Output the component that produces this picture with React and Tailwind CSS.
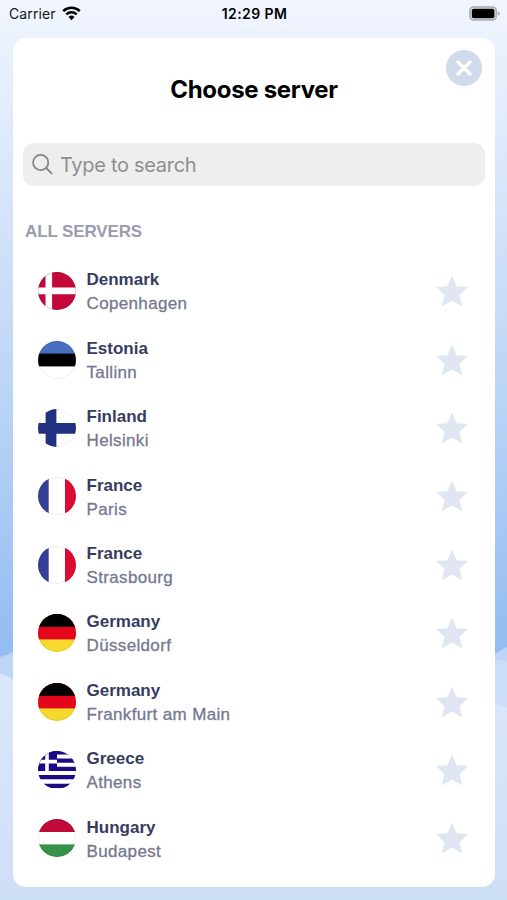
import { useState } from "react";

const servers = [
  { flag: "denmark", country: "Denmark", city: "Copenhagen" },
  { flag: "estonia", country: "Estonia", city: "Tallinn" },
  { flag: "finland", country: "Finland", city: "Helsinki" },
  { flag: "france", country: "France", city: "Paris" },
  { flag: "france", country: "France", city: "Strasbourg" },
  { flag: "germany", country: "Germany", city: "Düsseldorf" },
  { flag: "germany", country: "Germany", city: "Frankfurt am Main" },
  { flag: "greece", country: "Greece", city: "Athens" },
  { flag: "hungary", country: "Hungary", city: "Budapest" },
];

const flags = {
  denmark: (
    <>
      <rect width="38" height="38" fill="#c2083b" />
      <path d="M10.8 0v38M0 18.9h38" stroke="#fff" strokeWidth="6.6" />
    </>
  ),
  estonia: (
    <>
      <rect width="38" height="38" fill="#fff" />
      <rect width="38" height="13" fill="#466fbe" />
      <rect y="12.6" width="38" height="12.8" fill="#000" />
    </>
  ),
  finland: (
    <>
      <rect width="38" height="38" fill="#fff" />
      <path d="M13 0v38M0 19.4h38" stroke="#20327f" strokeWidth="10.8" />
    </>
  ),
  france: (
    <>
      <rect width="38" height="38" fill="#fff" />
      <rect width="10.7" height="38" fill="#343f97" />
      <rect x="27" width="11" height="38" fill="#dd0a34" />
    </>
  ),
  germany: (
    <>
      <rect width="38" height="38" fill="#f6d92c" />
      <rect width="38" height="25.4" fill="#e4061c" />
      <rect width="38" height="12.8" fill="#000" />
    </>
  ),
  greece: (
    <>
      <rect width="38" height="38" fill="#fff" />
      <path d="M0 1.4h38M0 9.6h38M0 17.8h38M0 26.2h38M0 34.8h38" stroke="#1e0a86" strokeWidth="4.2" />
      <rect width="19" height="19.9" fill="#1e0a86" />
      <path d="M9 0v19.9M0 10.6h19" stroke="#fff" strokeWidth="3.6" />
    </>
  ),
  hungary: (
    <>
      <rect width="38" height="38" fill="#fff" />
      <rect width="38" height="13" fill="#c00a37" />
      <rect y="25.4" width="38" height="13" fill="#38914a" />
    </>
  ),
};

function Flag({ name }) {
  return (
    <span className="relative w-[38px] h-[38px] shrink-0 rounded-full overflow-hidden">
      <svg viewBox="0 0 38 38" className="w-full h-full">{flags[name]}</svg>
      <span className="absolute inset-0 rounded-full border border-black/8" />
    </span>
  );
}

function StatusBar() {
  return (
    <div className="grid grid-cols-3 items-center h-[26px] pl-[9px] pr-[7px] font-['Inter',sans-serif] text-[14px] text-[#15171c]">
      <div className="flex items-center gap-[6px]">
        <span className="tracking-[0.1px]">Carrier</span>
        <svg width="19" height="15" viewBox="0 0 19 15" className="text-black">
          <path d="M1.2 5.1a11.8 11.8 0 0 1 16.6 0" fill="none" stroke="currentColor" strokeWidth="2.5" />
          <path d="M4.3 8.4a7.4 7.4 0 0 1 10.4 0" fill="none" stroke="currentColor" strokeWidth="2.3" />
          <path d="M9.5 14.2 6.5 11a4.3 4.3 0 0 1 6 0z" fill="currentColor" />
        </svg>
      </div>
      <span className="text-center font-semibold tracking-[0.4px] text-black">12:29 PM</span>
      <svg width="31" height="15" viewBox="0 0 31 15" className="justify-self-end">
        <rect x="0.9" y="0.9" width="26.4" height="13.2" rx="3.8" fill="#dfe2e8" stroke="#a7a9ae" strokeWidth="1.5" />
        <rect x="2.8" y="2.8" width="22.6" height="9.4" rx="1.8" fill="#000" />
        <path d="M28.8 5.2c1.4.5 1.9 1.3 1.9 2.3s-.5 1.8-1.9 2.3z" fill="#a7a9ae" />
      </svg>
    </div>
  );
}

export default function App() {
  const [query, setQuery] = useState("");
  const [favorites, setFavorites] = useState([]);

  const toggleFavorite = (index) => {
    setFavorites(favorites.includes(index) ? favorites.filter((i) => i !== index) : [...favorites, index]);
  };

  return (
    <div className="relative isolate w-[507px] h-[900px] overflow-hidden flex flex-col bg-linear-to-b from-[#f1f5fd] via-[#c2d9f7] via-38% to-[#91bbf1] to-74%">
      {/* Snowy hills */}
      <svg viewBox="0 0 507 900" className="absolute inset-0 -z-10 w-full h-full">
        <defs>
          <linearGradient id="hill" x1="0" y1="0" x2="0" y2="1">
            <stop offset="0" stopColor="#dbe7f9" />
            <stop offset="1" stopColor="#cddff7" />
          </linearGradient>
        </defs>
        <path d="M0 657Q8 655 13 652L494 655Q500 650 507 647V900H0Z" fill="#bfd5f5" />
        <path d="M494 660Q502 660 507 662V710H494Z" fill="#cbddf7" />
        <path d="M0 674Q7 675 13 680L494 704Q500 705 507 708V900H0Z" fill="url(#hill)" />
      </svg>

      <StatusBar />

      <main className="relative mt-[12px] ml-[13px] mr-[12px] h-[849px] rounded-[13px] bg-white">
        <button aria-label="Close" className="absolute top-[12px] right-[13px] w-9 h-9 rounded-full bg-[#cfdaea] flex items-center justify-center">
          <svg width="16" height="16" viewBox="0 0 16 16">
            <path d="M2 2l12 12M14 2 2 14" stroke="#fff" strokeWidth="3.4" strokeLinecap="round" />
          </svg>
        </button>

        <h1 className="pt-[36px] text-center text-[24px] leading-8 font-bold tracking-[-0.3px] text-black font-['Inter',sans-serif]">Choose server</h1>

        {/* Search */}
        <label className="mt-[37px] mx-[10px] h-[43px] rounded-[11px] bg-[#eeeeee] flex items-center pl-[9px] gap-[7px]">
          <svg width="21" height="21" viewBox="0 0 21 21" fill="none" stroke="#858587" strokeWidth="1.8" strokeLinecap="round">
            <circle cx="8.7" cy="8.5" r="7.6" />
            <path d="M14.2 14l5.4 5.3" />
          </svg>
          <input
            value={query}
            onChange={(e) => setQuery(e.target.value)}
            placeholder="Type to search"
            className="flex-1 bg-transparent outline-none text-[20px] tracking-[-0.3px] font-['Inter',sans-serif] placeholder:text-[#8e8e91]"
          />
        </label>

        <h2 className="mt-[35px] ml-[12px] text-[17px] leading-[22px] font-bold tracking-[-0.12px] text-[#9a9cb0] font-['Liberation_Sans',sans-serif]">ALL SERVERS</h2>

        {/* Server list */}
        <ul className="mt-[14px] pl-[25px] pr-[26px] font-['Liberation_Sans',sans-serif]">
          {servers.map((server, index) => (
            <li key={index} className="flex items-center h-[68.4px]">
              <Flag name={server.flag} />
              <div className="ml-[10.5px] pt-[2.5px] flex-1 text-[17px] leading-6">
                <p className="font-bold text-[#363c5f]">{server.country}</p>
                <p className="tracking-[0.35px] text-[#75788f] [-webkit-text-stroke:0.3px_#75788f]">{server.city}</p>
              </div>
              <button aria-label="Favorite" onClick={() => toggleFavorite(index)}>
                <svg width="34" height="32" viewBox="0 0 34 32" className={favorites.includes(index) ? "text-amber-300" : "text-[#dfe6f2]"}>
                  <path d="M17 0.4 21.6 11.3 33.2 12.1 24.5 19.8 27.3 31.4 17 25.4 6.7 31.4 9.5 19.8 0.8 12.1 12.4 11.3Z" fill="currentColor" />
                </svg>
              </button>
            </li>
          ))}
        </ul>
      </main>
    </div>
  );
}
